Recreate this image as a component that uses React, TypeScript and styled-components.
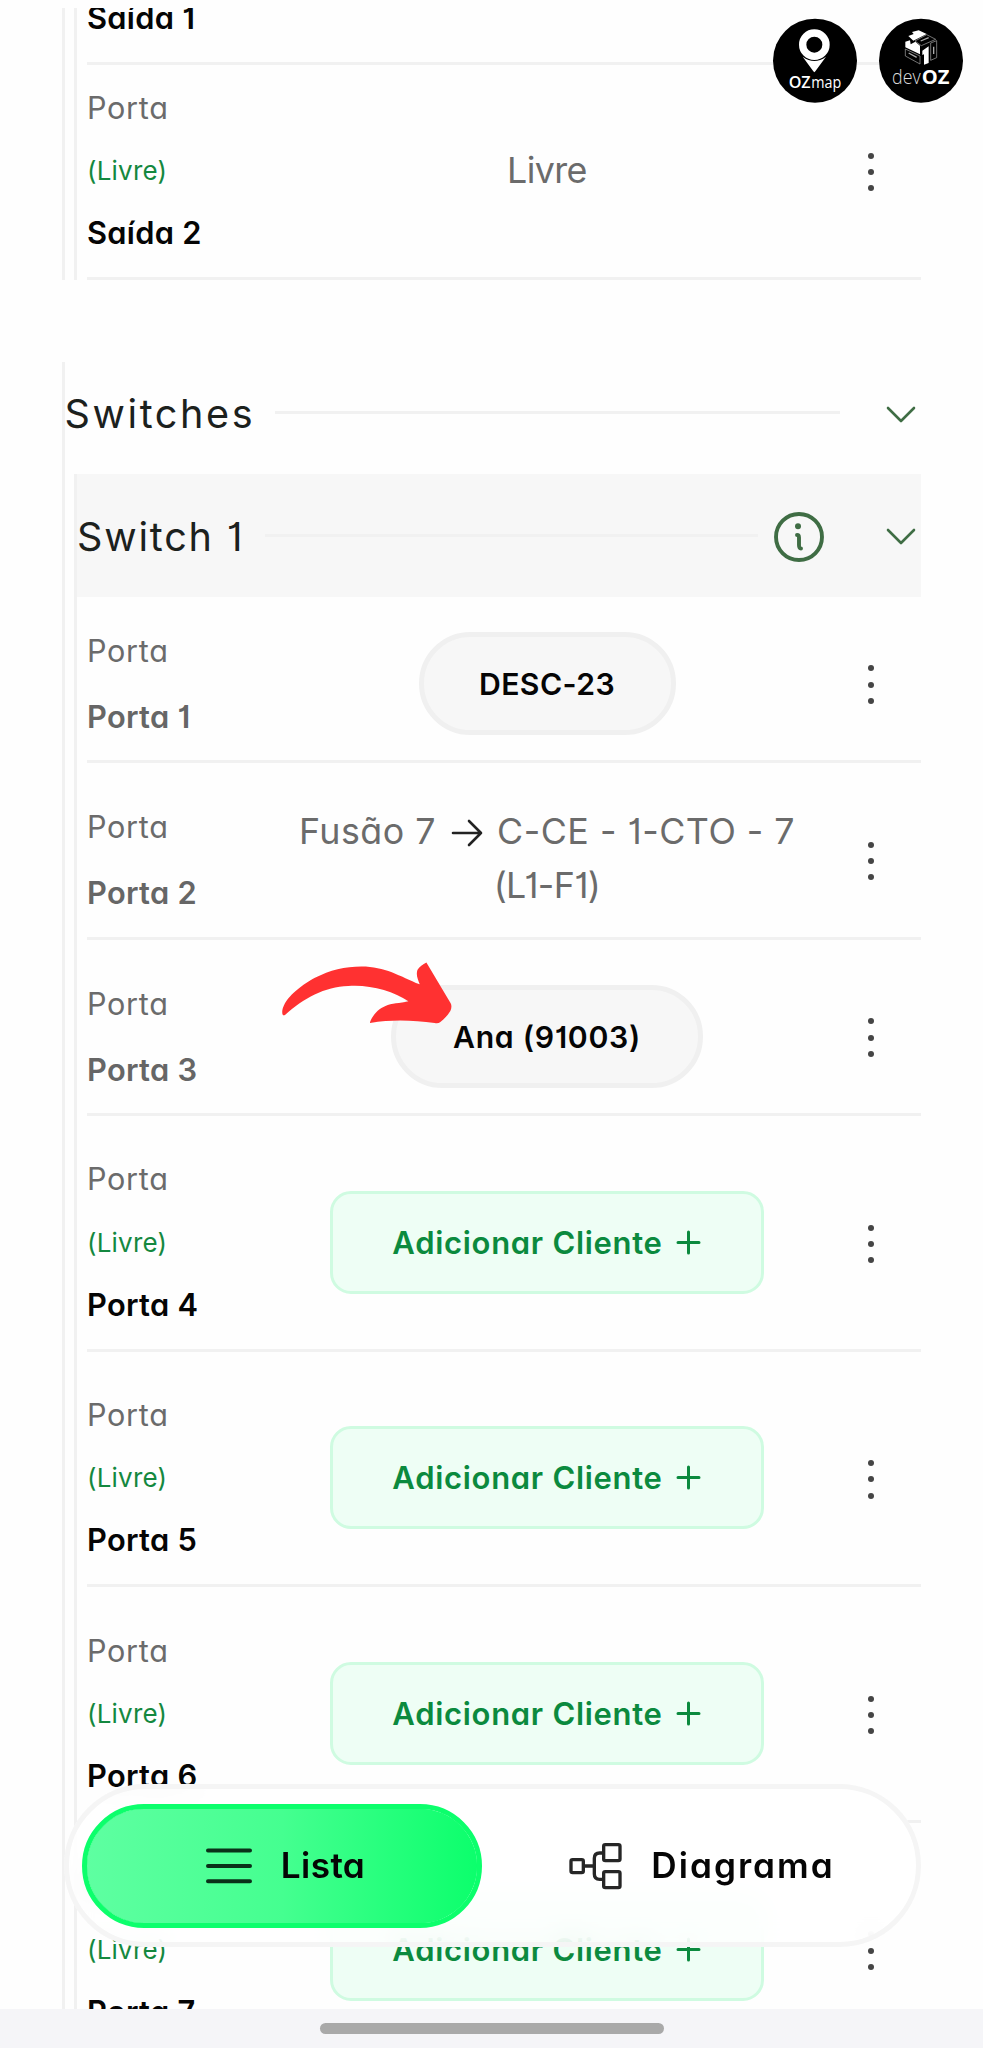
import React from "react";
import styled, { createGlobalStyle } from "styled-components";

const LINE = "#f1f1f1";

const GlobalStyle = createGlobalStyle`
  * { box-sizing: border-box; }
  body {
    margin: 0;
    background: #fefefe;
    font-family: Inter, "Liberation Sans", sans-serif;
    font-feature-settings: "cv11", "cv01";
  }
  button { font: inherit; font-feature-settings: inherit; padding: 0; background: none; border: 0; }
`;

const Screen = styled.div`
  position: relative;
  display: flex;
  flex-direction: column;
  width: 983px;
  height: 2048px;
  padding-top: 8px;
  overflow: hidden;
`;

const ScrollArea = styled.main`
  flex: 1;
  min-height: 0;
  overflow: hidden;
  padding: 0 62px 0 61.5px;
`;

const Group = styled.section<{ $gap?: number }>`
  border-left: 3px solid ${LINE};
  margin-top: ${(p) => p.$gap ?? 0}px;
`;

const Nested = styled.div`
  margin-left: 9.5px;
  border-left: 3px solid ${LINE};
`;

const Rows = styled.div`
  padding-left: 10px;
`;

const GroupHeader = styled.header<{ $filled?: boolean }>`
  display: flex;
  align-items: center;
  height: ${(p) => (p.$filled ? 122.4 : 112.6)}px;
  padding: ${(p) => (p.$filled ? "3px 5px 0 0" : "0 5px 7px 0")};
  background: ${(p) => (p.$filled ? "#f7f7f7" : "transparent")};
`;

const GroupTitle = styled.h2<{ $tracking: number }>`
  margin: 0;
  font-size: 39.6px;
  font-weight: 400;
  line-height: 48px;
  letter-spacing: ${(p) => p.$tracking}px;
  color: #1c211d;
  white-space: nowrap;
`;

const Rule = styled.div<{ $left: number; $right: number }>`
  flex: 1;
  height: 3px;
  margin: 0 ${(p) => p.$right}px 3px ${(p) => p.$left}px;
  background: ${LINE};
`;

const InfoIcon = styled.svg`
  width: 50px;
  height: 50px;
  margin-right: 62px;
  flex: none;
`;

const ChevronIcon = styled.svg`
  width: 30px;
  height: 17px;
  flex: none;
`;

const Row = styled.div<{ $height: number; $top: number; $clipped?: boolean }>`
  display: flex;
  align-items: ${(p) => (p.$clipped ? "flex-end" : "flex-start")};
  height: ${(p) => p.$height}px;
  padding-top: ${(p) => p.$top}px;
  padding-bottom: ${(p) => (p.$clipped ? 10.2 : 0)}px;
  border-bottom: 3px solid ${LINE};
  overflow: ${(p) => (p.$clipped ? "hidden" : "visible")};
`;

const RowInner = styled.div`
  display: grid;
  grid-template-columns: 190px 540px 104px;
  align-items: center;
  width: 100%;
`;

const Labels = styled.div<{ $free: boolean }>`
  display: grid;
  grid-template-rows: ${(p) => (p.$free ? "65px 62px 62px" : "66.3px 66.3px")};
  align-items: center;
  padding-bottom: ${(p) => (p.$free ? 3 : 0)}px;
  white-space: nowrap;
`;

const Kind = styled.span`
  font-size: 30.6px;
  letter-spacing: 0.7px;
  color: #6b6b6b;
`;

const FreeTag = styled.span`
  font-size: 26px;
  letter-spacing: 0.2px;
  color: #14883f;
`;

const PortName = styled.span<{ $muted?: boolean }>`
  font-size: 30.8px;
  font-weight: 600;
  letter-spacing: 0.3px;
  color: ${(p) => (p.$muted ? "#666" : "#050505")};
`;

const Center = styled.div`
  display: flex;
  justify-content: center;
  align-items: center;
`;

const FreeText = styled.span`
  font-size: 35.8px;
  line-height: 53.5px;
  letter-spacing: -0.6px;
  color: #6b6b6b;
`;

const Connection = styled.div`
  display: flex;
  flex-direction: column;
  align-items: center;
  margin-bottom: 2px;
  font-size: 35.8px;
  line-height: 53.5px;
  color: #6b6b6b;
`;

const ConnectionPath = styled.div`
  display: flex;
  align-items: center;
  letter-spacing: 0.5px;
  white-space: nowrap;
`;

const FiberName = styled.span`
  letter-spacing: -0.6px;
`;

const ArrowIcon = styled.svg`
  width: 32px;
  height: 28px;
  margin: 3px 14px 0 15px;
`;

const Client = styled.button<{ $width: number; $tracking: number }>`
  position: relative;
  width: ${(p) => p.$width}px;
  height: 102.5px;
  margin-top: 1px;
  border: 5px solid #f0f0f0;
  border-radius: 52px;
  background: #f7f7f7;
  font-size: 30.2px;
  font-weight: 600;
  letter-spacing: ${(p) => p.$tracking}px;
  color: #050505;
`;

const Pointer = styled.svg`
  position: absolute;
  left: -116px;
  top: -29px;
  width: 173px;
  height: 64px;
`;

const AddClient = styled.button`
  display: flex;
  align-items: center;
  justify-content: center;
  gap: 13px;
  width: 434px;
  height: 103px;
  padding-right: 1px;
  border: 3px solid #cffbe1;
  border-radius: 21px;
  background: #eefef5;
  font-size: 31px;
  font-weight: 600;
  letter-spacing: 0.7px;
  color: #0b8a3e;
`;

const PlusIcon = styled.svg`
  width: 25px;
  height: 25px;
`;

const Menu = styled.button`
  display: flex;
  flex-direction: column;
  align-items: center;
  gap: 10.2px;
  margin: 3px 0 0 3px;
`;

const Dot = styled.i`
  width: 6px;
  height: 6px;
  border-radius: 50%;
  background: #454545;
`;

const Switcher = styled.nav`
  position: absolute;
  left: 64px;
  top: 1784px;
  display: flex;
  align-items: center;
  width: 857px;
  height: 163px;
  padding: 0 13px;
  border: 5px solid #f5f5f5;
  border-radius: 82px;
  background: rgba(255, 255, 255, 0.8);
  backdrop-filter: blur(12px);
`;

const Tab = styled.button<{ $active?: boolean }>`
  display: flex;
  align-items: center;
  justify-content: center;
  flex: ${(p) => (p.$active ? "0 0 400px" : "1")};
  gap: 28px;
  height: 124px;
  padding-bottom: 1px;
  padding-left: ${(p) => (p.$active ? 6 : 18)}px;
  border-radius: 62px;
  border: ${(p) => (p.$active ? "5.5px solid #0cff6c" : "0")};
  background: ${(p) => (p.$active ? "linear-gradient(90deg, #5effa1, #45ff90 50%, #0cff6c)" : "transparent")};
  background-clip: padding-box;
  background-color: ${(p) => (p.$active ? "#0cff6c" : "transparent")};
  color: #050505;
`;

const TabLabel = styled.span<{ $tracking: number }>`
  font-size: 35.2px;
  font-weight: 600;
  line-height: 44px;
  letter-spacing: ${(p) => p.$tracking}px;
`;

const TabIcon = styled.svg<{ $width: number }>`
  width: ${(p) => p.$width}px;
  height: 50px;
  margin-top: 1px;
`;

const HomeArea = styled.footer`
  position: relative;
  display: flex;
  justify-content: center;
  align-items: flex-start;
  height: 39px;
  padding-top: 14px;
  background: #f5f5f8;
`;

const HomeHandle = styled.div`
  width: 344px;
  height: 10.5px;
  border-radius: 6px;
  background: #a9a9a9;
`;

const Brands = styled.div`
  position: absolute;
  left: 770px;
  top: 15px;
  display: flex;
  gap: 16px;
`;

const Logo = styled.svg`
  width: 90px;
  height: 92px;
  font-family: "Open Sans", "Noto Sans", sans-serif;
  font-feature-settings: normal;
`;

const Chevron = () => (
  <ChevronIcon viewBox="0 0 30 17" fill="none" stroke="#3f6d44" strokeWidth="2.6" strokeLinecap="round" strokeLinejoin="round">
    <path d="M2 2 L15 15 L28 2" />
  </ChevronIcon>
);

type PortProps = {
  name: string;
  free?: boolean;
  height?: number;
  top?: number;
  clipped?: boolean;
  children?: React.ReactNode;
};

function Port({ name, free, height, top = 30.2, clipped, children }: PortProps) {
  if (clipped) {
    return (
      <Row $height={height ?? 56} $top={0} $clipped>
        <Labels $free>
          <span />
          <span />
          <PortName>{name}</PortName>
        </Labels>
      </Row>
    );
  }
  return (
    <Row $height={height ?? (free ? 235.6 : 176.5)} $top={top}>
      <RowInner>
        <Labels $free={!!free}>
          <Kind>Porta</Kind>
          {free && <FreeTag>(Livre)</FreeTag>}
          <PortName $muted={!free}>{name}</PortName>
        </Labels>
        <Center>{children}</Center>
        <Center>
          <Menu aria-label="Opções">
            <Dot />
            <Dot />
            <Dot />
          </Menu>
        </Center>
      </RowInner>
    </Row>
  );
}

const AddButton = () => (
  <AddClient>
    Adicionar Cliente
    <PlusIcon viewBox="0 0 25 25" stroke="#0b8a3e" strokeWidth="3" strokeLinecap="round">
      <path d="M12.5 2V23M2 12.5H23" />
    </PlusIcon>
  </AddClient>
);

export default function App() {
  return (
    <Screen>
      <GlobalStyle />
      <ScrollArea>
        <Group>
          <Nested>
            <Rows>
              <Port name="Saída 1" height={56.6} clipped />
              <Port name="Saída 2" free height={215} top={10}>
                <FreeText>Livre</FreeText>
              </Port>
            </Rows>
          </Nested>
        </Group>

        <Group $gap={82.1}>
          <GroupHeader>
            <GroupTitle $tracking={2.6}>Switches</GroupTitle>
            <Rule $left={20} $right={46} />
            <Chevron />
          </GroupHeader>
          <Nested>
            <GroupHeader $filled>
              <GroupTitle $tracking={1.8}>Switch 1</GroupTitle>
              <Rule $left={21} $right={16} />
              <InfoIcon viewBox="0 0 50 50" fill="none" stroke="#3f6d44" strokeWidth="3.9" strokeLinecap="round" strokeLinejoin="round">
                <circle cx="25" cy="25" r="23" />
                <path d="M23 23 Q25 23 25 25.5 V33 Q25 36.5 27 36.5" />
                <circle cx="24" cy="14.3" r="3" fill="#3f6d44" stroke="none" />
              </InfoIcon>
              <Chevron />
            </GroupHeader>
            <Rows>
              <Port name="Porta 1" height={166.5} top={20.2}>
                <Client $width={257} $tracking={0.4}>DESC-23</Client>
              </Port>
              <Port name="Porta 2">
                <Connection>
                  <ConnectionPath>
                    Fusão 7
                    <ArrowIcon viewBox="0 0 32 28" fill="none" stroke="#222" strokeWidth="2.6" strokeLinecap="round" strokeLinejoin="round">
                      <path d="M2 14H30M18 2L30 14L18 26" />
                    </ArrowIcon>
                    C-CE - 1-CTO - 7
                  </ConnectionPath>
                  <FiberName>(L1-F1)</FiberName>
                </Connection>
              </Port>
              <Port name="Porta 3">
                <Client $width={312} $tracking={0.7}>
                  Ana (91003)
                  <Pointer viewBox="60 95 520 192">
                    <path
                      fill="#ff3131"
                      d="M67 243C75 205 120 170 165 145C210 122 255 111 305 111C375 111 420 140 480 165C475 150 468 138 473 122C478 112 490 105 500 99L573 222Q578 232 572 245C564 258 553 270 542 278Q536 283 525 281C460 273 400 270 330 281C335 262 355 238 377 230C395 222 420 222 446 216C400 185 330 165 265 170C195 172 130 207 75 257Q65 262 67 243Z"
                    />
                  </Pointer>
                </Client>
              </Port>
              {["Porta 4", "Porta 5", "Porta 6", "Porta 7"].map((name) => (
                <Port key={name} name={name} free>
                  <AddButton />
                </Port>
              ))}
            </Rows>
          </Nested>
        </Group>
      </ScrollArea>

      <Switcher>
        <Tab $active>
          <TabIcon $width={48} viewBox="0 0 48 50" stroke="#0a3019" strokeWidth="4" strokeLinecap="round">
            <path d="M3 9.5H45M3 25H45M3 40.3H45" />
          </TabIcon>
          <TabLabel $tracking={0.4}>Lista</TabLabel>
        </Tab>
        <Tab>
          <TabIcon $width={55} viewBox="205 303 165 150" fill="none" stroke="#262626" strokeWidth="10" strokeLinejoin="round">
            <rect x="214" y="359" width="37" height="39" rx="5" />
            <rect x="312" y="314" width="49" height="48" rx="5" />
            <rect x="312" y="395" width="49" height="48" rx="5" />
            <path d="M252 378H283M312 339H300Q284 339 284 355V402Q284 418 300 418H312" />
          </TabIcon>
          <TabLabel $tracking={2}>Diagrama</TabLabel>
        </Tab>
      </Switcher>

      <Brands>
        <Logo viewBox="0 0 270 276">
          <circle cx="135" cy="137" r="126" />
          <circle cx="133" cy="89" r="35" fill="none" stroke="#fff" strokeWidth="22" />
          <path d="M98 125Q133 151 168 125L136 169Q133 174 130 169Z" fill="#fff" />
          <text x="56" y="220" fill="#fff" fontSize="50" fontWeight="600" textLength="66" lengthAdjust="spacingAndGlyphs">OZ</text>
          <text x="124" y="220" fill="#fff" fontSize="48" fontWeight="400" textLength="90" lengthAdjust="spacingAndGlyphs">map</text>
        </Logo>
        <Logo viewBox="0 0 270 276">
          <circle cx="135" cy="137" r="126" />
          <g fill="#fff">
            <path d="M97 63L113 57L108 51L128 46L152 57L112 77Z" />
            <path d="M88 80L102 76L104 88L118 80L132 92V118L88 97Z" />
            <path d="M139 107L158 94V144L144 149V118L139 120Z" />
          </g>
          <g fill="none" stroke="#aaa" strokeWidth="2">
            <path d="M117 78L152 59L179 73L136 92Z" />
            <path d="M88 102L132 123V147L88 123Z" />
            <path d="M164 84L182 77V128L164 136Z" />
            <path d="M134 78L158 68M98 114L122 127M173 95V117" strokeWidth="4" />
          </g>
          <text x="48" y="207" fill="#ddd" fontSize="58" fontWeight="300" textLength="86" lengthAdjust="spacingAndGlyphs">dev</text>
          <text x="137" y="207" fill="#fff" fontSize="59" fontWeight="700" textLength="83" lengthAdjust="spacingAndGlyphs">OZ</text>
        </Logo>
      </Brands>

      <HomeArea>
        <HomeHandle />
      </HomeArea>
    </Screen>
  );
}
